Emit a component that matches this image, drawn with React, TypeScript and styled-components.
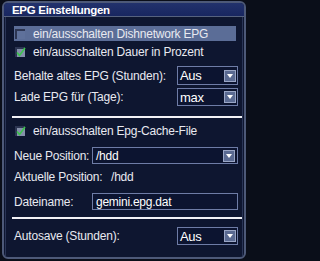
import styled, { createGlobalStyle } from 'styled-components';

const Global = createGlobalStyle`
  html, body {
    margin: 0;
    padding: 0;
    background: #0a0e19;
  }
  body {
    font-family: 'Liberation Sans', Arial, sans-serif;
  }
`;

const Window = styled.div`
  box-sizing: border-box;
  width: 244px;
  height: 258px;
  margin: 1px 0 0 2px;
  border: 2px solid #4d5978;
  border-radius: 6px;
  background: #0e1630;
  overflow: hidden;
  display: flex;
  flex-direction: column;
`;

const TitleBar = styled.div`
  height: 13px;
  background: linear-gradient(#22326c, #182660);
  border-bottom: 1px solid #56627f;
  color: #ffffff;
  font-weight: bold;
  font-size: 11.5px;
  letter-spacing: -0.3px;
  line-height: 14px;
  padding-left: 8px;
`;

const Content = styled.div`
  flex: 1;
  display: flex;
  flex-direction: column;
  padding: 0 4px 0 8px;
  border-left: 1px solid #2a3556;
  border-right: 1px solid #2a3556;
  margin: 0 1px;
`;

const Row = styled.div<{ $mt: number; $h: number; $active?: boolean }>`
  display: flex;
  align-items: center;
  margin-top: ${(p) => p.$mt}px;
  height: ${(p) => p.$h}px;
  color: #e8e9f0;
  font-size: 12px;
  letter-spacing: -0.2px;
  white-space: nowrap;
  background: ${(p) => (p.$active ? '#5b6d97' : 'transparent')};
  margin-right: ${(p) => (p.$active ? 2 : 0)}px;
`;

const Label = styled.span<{ $w?: number }>`
  flex: ${(p) => (p.$w ? `0 0 ${p.$w}px` : '1')};
`;

const Box = styled.span<{ $checked?: boolean }>`
  position: relative;
  box-sizing: border-box;
  width: 10px;
  height: 10px;
  margin: 0 8px 0 1px;
  background: ${(p) => (p.$checked ? '#8590aa' : '#5f719b')};
  border-top: 2px solid #2c3552;
  border-left: 2px solid #2c3552;
`;

const CheckMark = styled.svg`
  position: absolute;
  left: -2px;
  top: -3px;
  overflow: visible;
`;

const Select = styled.div<{ $w: number }>`
  box-sizing: border-box;
  width: ${(p) => p.$w}px;
  height: 100%;
  border: 1px solid #6e7ca6;
  background: #0c1430;
  display: flex;
  align-items: center;
  padding: 0 1px 0 2px;
  color: #ffffff;
  font-size: 13px;
  letter-spacing: -0.3px;
`;

const SelectText = styled.span`
  flex: 1;
`;

const Arrow = styled.span`
  box-sizing: border-box;
  width: 12px;
  height: 12px;
  background: #5a6a92;
  border: 1px solid #9aa6c6;
  display: flex;
  align-items: center;
  justify-content: center;
`;

const Field = styled.div`
  box-sizing: border-box;
  width: 150px;
  height: 100%;
  border: 1px solid #6e7ca6;
  background: #0c1430;
  display: flex;
  align-items: center;
  padding: 0 2px 0 3px;
  color: #ffffff;
  font-size: 12px;
  letter-spacing: -0.25px;
`;

const Separator = styled.div<{ $mt: number }>`
  margin-top: ${(p) => p.$mt}px;
  height: 2px;
  width: 230px;
  margin-left: -2px;
  background: #f2f2f6;
`;

function Check() {
  return (
    <CheckMark width="11" height="11" viewBox="0 0 11 11">
      <path d="M2 6.5 L4.5 9.5 L10 2" fill="none" stroke="#3cc44c" strokeWidth="1.6" />
    </CheckMark>
  );
}

function DropArrow() {
  return (
    <svg width="6" height="4" viewBox="0 0 6 4">
      <path d="M0 0 H6 L3 4 Z" fill="#ffffff" />
    </svg>
  );
}

function Dropdown({ value }: { value: string }) {
  return (
    <Select $w={61}>
      <SelectText>{value}</SelectText>
      <Arrow>
        <DropArrow />
      </Arrow>
    </Select>
  );
}

export default function App() {
  return (
    <>
      <Global />
      <Window>
        <TitleBar>EPG Einstellungen</TitleBar>
        <Content>
          <Row $mt={9} $h={15} $active>
            <Box />
            ein/ausschalten Dishnetwork EPG
          </Row>
          <Row $mt={2} $h={18}>
            <Box $checked>
              <Check />
            </Box>
            ein/ausschalten Dauer in Prozent
          </Row>
          <Row $mt={5} $h={19}>
            <Label>Behalte altes EPG (Stunden):</Label>
            <Dropdown value="Aus" />
          </Row>
          <Row $mt={3} $h={18}>
            <Label>Lade EPG für (Tage):</Label>
            <Dropdown value="max" />
          </Row>
          <Separator $mt={10} />
          <Row $mt={4} $h={18}>
            <Box $checked>
              <Check />
            </Box>
            ein/ausschalten Epg-Cache-File
          </Row>
          <Row $mt={7} $h={17}>
            <Label $w={78}>Neue Position:</Label>
            <Field>
              <SelectText>/hdd</SelectText>
              <Arrow>
                <DropArrow />
              </Arrow>
            </Field>
          </Row>
          <Row $mt={4} $h={18}>
            <Label $w={97}>Aktuelle Position:</Label>
            /hdd
          </Row>
          <Row $mt={7} $h={17}>
            <Label $w={78}>Dateiname:</Label>
            <Field>gemini.epg.dat</Field>
          </Row>
          <Separator $mt={7} />
          <Row $mt={8} $h={18}>
            <Label>Autosave (Stunden):</Label>
            <Dropdown value="Aus" />
          </Row>
        </Content>
      </Window>
    </>
  );
}
